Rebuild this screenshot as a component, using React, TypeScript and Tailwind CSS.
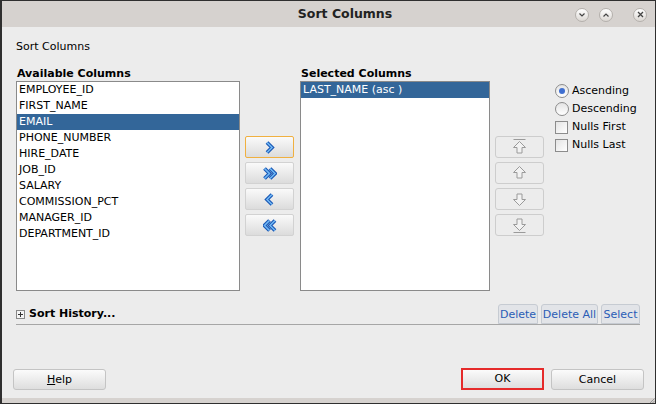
import React from 'react';

const AVAILABLE = [
  'EMPLOYEE_ID',
  'FIRST_NAME',
  'EMAIL',
  'PHONE_NUMBER',
  'HIRE_DATE',
  'JOB_ID',
  'SALARY',
  'COMMISSION_PCT',
  'MANAGER_ID',
  'DEPARTMENT_ID',
];

// blue chevrons used on the move buttons
function Chevrons({ dir, count }: { dir: 'right' | 'left'; count: 1 | 2 }) {
  const one = (x: number) =>
    dir === 'right' ? `M${x} 1.5 L${x + 5} 6.5 L${x} 11.5` : `M${x + 5} 1.5 L${x} 6.5 L${x + 5} 11.5`;
  const xs = count === 1 ? [4] : [1.5, 7];
  return (
    <svg width="14" height="13" viewBox="0 0 14 13">
      {xs.map((x) => (
        <g key={x}>
          <path d={one(x)} fill="none" stroke="#1957b5" strokeWidth="3.8" strokeLinejoin="miter" />
          <path d={one(x)} fill="none" stroke="#72b9f6" strokeWidth="1.5" strokeLinejoin="miter" />
        </g>
      ))}
    </svg>
  );
}

function BlockArrow({ dir, bar }: { dir: 'up' | 'down'; bar?: boolean }) {
  const up = 'M7.5 1.5 L13.5 7.5 L10 7.5 L10 13 L5 13 L5 7.5 L1.5 7.5 Z';
  return (
    <svg width="15" height="16" viewBox="0 0 15 16">
      <g transform={dir === 'down' ? 'rotate(180 7.5 8)' : undefined}>
        {bar && <line x1="1.5" y1="0.5" x2="13.5" y2="0.5" stroke="#9a9a9a" strokeWidth="1" />}
        <path d={bar ? 'M7.5 2.5 L13.5 8.5 L10 8.5 L10 14 L5 14 L5 8.5 L1.5 8.5 Z' : up} fill="#f2f2f2" stroke="#9a9a9a" strokeWidth="1" />
      </g>
    </svg>
  );
}

function TitleButton({ children, className = '' }: { children: React.ReactNode; className?: string }) {
  return (
    <div className={`w-[14px] h-[14px] rounded-full border border-[#b4b0ac] bg-gradient-to-b from-white to-[#dcd8d4] flex items-center justify-center ${className}`}>
      {children}
    </div>
  );
}

export default function App() {
  return (
    <div className="w-[656px] h-[405px] bg-white font-['DejaVu_Sans','Liberation_Sans',sans-serif] text-[11px] text-black">
      <div className="w-[656px] h-[404px] border border-[#2f2f2f] border-l-2 flex flex-col bg-[#ececec]">
        {/* title bar */}
        <div className="h-[26px] bg-[#d6d2cf] flex items-center">
          <div className="flex-1 text-center font-bold text-[12.5px] text-[#222] pl-[113px] pt-[1px]">Sort Columns</div>
          <div className="flex items-center pr-[8px] pt-[1px]">
            <TitleButton>
              <svg width="6" height="4" viewBox="0 0 6 4"><path d="M0.5 0.5 L3 3 L5.5 0.5" fill="none" stroke="#444" strokeWidth="1.2" /></svg>
            </TitleButton>
            <TitleButton className="ml-[10px]">
              <svg width="6" height="4" viewBox="0 0 6 4"><path d="M0.5 3.5 L3 1 L5.5 3.5" fill="none" stroke="#444" strokeWidth="1.2" /></svg>
            </TitleButton>
            <TitleButton className="ml-[20px]">
              <svg width="7" height="7" viewBox="0 0 7 7"><path d="M1 1 L6 6 M6 1 L1 6" stroke="#444" strokeWidth="1.3" /></svg>
            </TitleButton>
          </div>
        </div>

        <div className="flex-1 flex flex-col pl-[14px] pr-[14px]">
          <div className="mt-[13px] h-[14px] leading-[14px]">Sort Columns</div>

          {/* main row */}
          <div className="mt-[13px] flex">
            <div className="w-[224px] flex flex-col">
              <div className="h-[14px] leading-[14px] font-bold pl-[1px]">Available Columns</div>
              <div className="h-[210px] bg-white border border-[#8a8a8a]">
                {AVAILABLE.map((c) => (
                  <div
                    key={c}
                    className={`h-[16px] leading-[16px] pl-[2px] ${c === 'EMAIL' ? 'bg-[#336699] text-white' : ''}`}
                  >
                    {c}
                  </div>
                ))}
              </div>
            </div>

            <div className="ml-[5px] w-[49px] pt-[69px] flex flex-col gap-[4px]">
              <button className="h-[22px] rounded-[2px] border border-[#f0b040] bg-gradient-to-b from-[#fafafa] to-[#dcdcdc] flex items-center justify-center">
                <Chevrons dir="right" count={1} />
              </button>
              <button className="h-[22px] rounded-[2px] border border-[#d2d2d2] bg-gradient-to-b from-[#fafafa] to-[#dcdcdc] flex items-center justify-center">
                <Chevrons dir="right" count={2} />
              </button>
              <button className="h-[22px] rounded-[2px] border border-[#d2d2d2] bg-gradient-to-b from-[#fafafa] to-[#dcdcdc] flex items-center justify-center">
                <Chevrons dir="left" count={1} />
              </button>
              <button className="h-[22px] rounded-[2px] border border-[#d2d2d2] bg-gradient-to-b from-[#fafafa] to-[#dcdcdc] flex items-center justify-center">
                <Chevrons dir="left" count={2} />
              </button>
            </div>

            <div className="ml-[6px] w-[190px] flex flex-col">
              <div className="h-[14px] leading-[14px] font-bold pl-[1px]">Selected Columns</div>
              <div className="h-[210px] bg-white border border-[#8a8a8a]">
                <div className="h-[16px] leading-[16px] pl-[2px] bg-[#336699] text-white">LAST_NAME (asc )</div>
              </div>
            </div>

            <div className="ml-[5px] w-[49px] pt-[69px] flex flex-col gap-[4px]">
              <div className="h-[22px] rounded-[3px] border border-[#cdcdcd] bg-[#ececec] flex items-center justify-center">
                <BlockArrow dir="up" bar />
              </div>
              <div className="h-[22px] rounded-[3px] border border-[#cdcdcd] bg-[#ececec] flex items-center justify-center">
                <BlockArrow dir="up" />
              </div>
              <div className="h-[22px] rounded-[3px] border border-[#cdcdcd] bg-[#ececec] flex items-center justify-center">
                <BlockArrow dir="down" />
              </div>
              <div className="h-[22px] rounded-[3px] border border-[#cdcdcd] bg-[#ececec] flex items-center justify-center">
                <BlockArrow dir="down" bar />
              </div>
            </div>

            <div className="ml-[11px] pt-[15px] flex flex-col">
              <div className="h-[18px] flex items-center gap-[3px]">
                <div className="w-[14px] h-[14px] rounded-full border border-[#8c8c8c] bg-gradient-to-b from-[#e4e4e4] to-white flex items-center justify-center">
                  <div className="w-[6px] h-[6px] rounded-full bg-[#3f6fd0]" />
                </div>
                <span>Ascending</span>
              </div>
              <div className="h-[18px] flex items-center gap-[3px]">
                <div className="w-[14px] h-[14px] rounded-full border border-[#8c8c8c] bg-gradient-to-b from-[#e4e4e4] to-white" />
                <span>Descending</span>
              </div>
              <div className="h-[18px] flex items-center gap-[3px]">
                <div className="w-[13px] h-[13px] border border-[#8c8c8c] bg-gradient-to-br from-[#e4e4e4] to-white" />
                <span className="ml-[1px]">Nulls First</span>
              </div>
              <div className="h-[18px] flex items-center gap-[3px]">
                <div className="w-[13px] h-[13px] border border-[#8c8c8c] bg-gradient-to-br from-[#e4e4e4] to-white" />
                <span className="ml-[1px]">Nulls Last</span>
              </div>
            </div>
          </div>

          {/* sort history */}
          <div className="mt-[13px] h-[21px] flex items-end border-b border-[#a6a6a6] mr-[1px]">
            <div className="flex-1 flex items-center h-[20px]">
              <div className="w-[9px] h-[9px] border border-[#888] bg-[#f4f4f4] flex items-center justify-center">
                <svg width="7" height="7" viewBox="0 0 7 7"><path d="M3.5 1 V6 M1 3.5 H6" stroke="#333" strokeWidth="1" /></svg>
              </div>
              <span className="ml-[4px] font-bold text-[11px]">Sort History...</span>
            </div>
            <div className="flex gap-[3px] text-[#2a5cb6]">
              <div className="h-[20px] w-[40px] text-center leading-[19px] border border-[#c6cbd2] rounded-t-[3px] bg-[#e2e4e8]">Delete</div>
              <div className="h-[20px] w-[57px] text-center leading-[19px] border border-[#c6cbd2] rounded-t-[3px] bg-[#e2e4e8]">Delete All</div>
              <div className="h-[20px] w-[39px] text-center leading-[19px] border border-[#c6cbd2] rounded-t-[3px] bg-[#e2e4e8]">Select</div>
            </div>
          </div>

          {/* bottom buttons */}
          <div className="mt-[43px] flex items-center -ml-[3px] -mr-[3px]">
            <button className="w-[93px] h-[21px] border border-[#c4c4c4] rounded-[3px] bg-gradient-to-b from-[#fbfbfb] to-[#dedede] text-center leading-[19px]">
              <span className="underline">H</span>elp
            </button>
            <div className="flex-1" />
            <div className="border-2 border-[#e52b2b]">
              <button className="w-[79px] h-[18px] bg-gradient-to-b from-[#fbfbfb] to-[#dedede] text-center leading-[18px] block">OK</button>
            </div>
            <button className="ml-[7px] w-[93px] h-[21px] border border-[#c4c4c4] rounded-[3px] bg-gradient-to-b from-[#fbfbfb] to-[#dedede] text-center leading-[19px]">
              Cancel
            </button>
          </div>
        </div>

        {/* status strip with resize grip */}
        <div className="h-[5px] bg-[#d6d2cf] flex justify-end">
          <svg width="6" height="5" viewBox="0 0 6 5">
            <path d="M5.5 0.5 L1 5 M5.5 3 L3.5 5" stroke="#9a9a9a" strokeWidth="1" />
          </svg>
        </div>
      </div>
    </div>
  );
}
